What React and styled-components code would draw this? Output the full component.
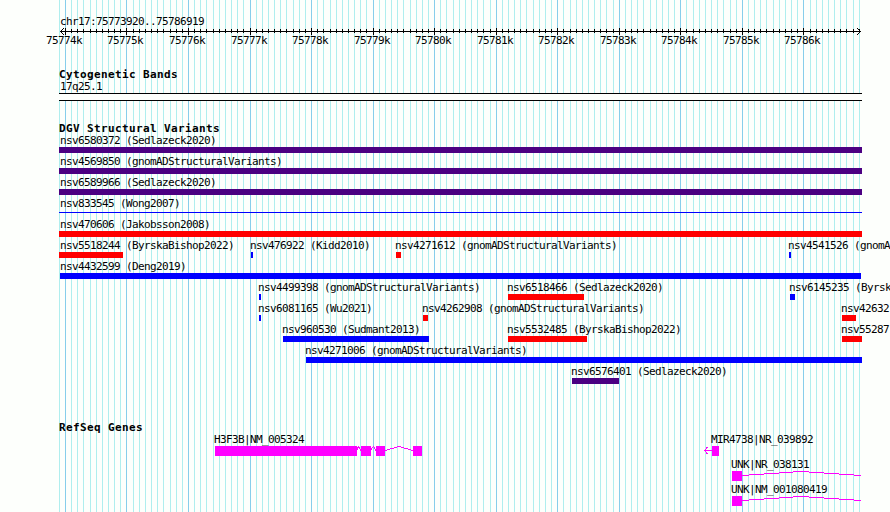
import React from "react";
import styled, { createGlobalStyle } from "styled-components";

const GlobalStyle = createGlobalStyle`
  html, body { margin: 0; padding: 0; overflow: hidden; background: #fdfffc; }
`;

const Browser = styled.main`
  position: relative;
  isolation: isolate;
  width: 890px;
  height: 512px;
  overflow: hidden;
  background: #fdfffc;
  color: #000;
  font-family: "DejaVu Sans Mono", monospace;
  font-size: 11px;
  line-height: 14px;
`;

const Backdrop = styled.svg`
  position: absolute;
  inset: 0;
  z-index: -1;
`;

const Text = styled.span`
  display: block;
  height: 12px;
  white-space: pre;
  letter-spacing: -0.622px;
`;

const Heading = styled.h2`
  margin: 0 0 0 59px;
  height: 12px;
  font-size: 11px;
  line-height: 14px;
  font-weight: 700;
  letter-spacing: 0.378px;
  white-space: pre;
`;

const Overview = styled.header`
  height: 68px;
  padding-top: 15px;
  box-sizing: border-box;
`;

const Region = styled(Text)`
  margin-left: 60px;
`;

const Axis = styled.svg`
  display: block;
  margin-top: 1px;
`;

const Columns = styled.div`
  display: grid;
  grid-template-columns: repeat(890, 1px);
  height: ${(p) => p.$height}px;
`;

const AxisLabel = styled(Text)`
  line-height: 12px;
`;

const Slot = styled.div`
  grid-row: 1;
  grid-column: ${(p) => p.$x + 1};
  width: 0;
`;

const Cytoband = styled.section`
  height: 54px;
`;

const BandName = styled(Text)`
  margin-left: 60px;
`;

const Band = styled.div`
  box-sizing: border-box;
  width: 803px;
  height: 8px;
  margin-left: 59px;
  margin-top: 1px;
  border: solid #000;
  border-width: 1px 0;
  background: #fdfffc;
`;

const Variants = styled.section`
  height: 299px;
`;

const VariantName = styled(Text)`
  margin-left: ${(p) => p.$shift}px;
`;

const Bar = styled.div`
  width: ${(p) => p.$w}px;
  height: ${(p) => (p.$thin ? 1 : 6)}px;
  margin-top: ${(p) => (p.$thin ? 3 : 1)}px;
  background: ${(p) => p.$color};
`;

const Gene = styled.div`
  width: 230px;
`;

const GeneName = styled(Text)`
  margin-left: -1px;
`;

const GeneModel = styled.svg`
  display: block;
  margin-left: -10px;
  margin-top: 1px;
  overflow: visible;
`;

const PURPLE = "#4b0082";
const RED = "#ff0000";
const BLUE = "#0000ff";
const PINK = "#ff00ff";

const ticks = Array.from({ length: 131 }, (_, i) => ({
  x: Math.floor(65.386 + ((i - 1) * 80) / 13),
  major: (i - 1) % 10 === 0,
}));
const rulerTicks = ticks.filter((t) => t.x < 862);
const kilobases = rulerTicks.filter((t) => t.major);

const lanes = [
  [["nsv6580372 (Sedlazeck2020)", 59, 803, PURPLE]],
  [["nsv4569850 (gnomADStructuralVariants)", 59, 803, PURPLE]],
  [["nsv6589966 (Sedlazeck2020)", 59, 803, PURPLE]],
  [["nsv833545 (Wong2007)", 59, 803, BLUE, true]],
  [["nsv470606 (Jakobsson2008)", 59, 803, RED]],
  [
    ["nsv5518244 (ByrskaBishop2022)", 59, 64, RED],
    ["nsv476922 (Kidd2010)", 251, 2, BLUE],
    ["nsv4271612 (gnomADStructuralVariants)", 396, 5, RED],
    ["nsv4541526 (gnomADStructuralVariants)", 789, 2, BLUE],
  ],
  [["nsv4432599 (Deng2019)", 60, 801, BLUE]],
  [
    ["nsv4499398 (gnomADStructuralVariants)", 259, 2, BLUE],
    ["nsv6518466 (Sedlazeck2020)", 508, 76, RED],
    ["nsv6145235 (ByrskaBishop2022)", 790, 5, BLUE],
  ],
  [
    ["nsv6081165 (Wu2021)", 259, 2, BLUE],
    ["nsv4262908 (gnomADStructuralVariants)", 423, 5, RED],
    ["nsv42632", 842, 14, RED],
  ],
  [
    ["nsv960530 (Sudmant2013)", 283, 146, BLUE],
    ["nsv5532485 (ByrskaBishop2022)", 508, 79, RED],
    ["nsv55287", 842, 20, RED],
  ],
  [["nsv4271006 (gnomADStructuralVariants)", 306, 556, BLUE]],
  [["nsv6576401 (Sedlazeck2020)", 572, 47, PURPLE]],
];

// Exons are [offset, width]; intron lines are drawn in the same offsets.
const geneLanes = [
  [
    {
      name: "H3F3B|NM_005324",
      x: 215,
      exons: [[0, 142], [146, 10], [161, 9], [198, 9]],
      path: "M142 3.5L143.5 .5L146 4.5M156 3.5L158.5 .5L161 4.5M170 4.5L184 .5L198 4.5",
    },
    {
      name: "MIR4738|NR_039892",
      x: 712,
      exons: [[0, 7]],
      path: "M0 4.5H-7.5M-4.5 1L-7.5 4.5L-4.5 8",
    },
  ],
  [{ name: "UNK|NR_038131", x: 732, exons: [[0, 10]], path: "M10 4.5L69 .5L129 4.5" }],
  [{ name: "UNK|NM_001080419", x: 732, exons: [[0, 10]], path: "M10 4.5L69 .5L129 4.5" }],
];

// Names of features that start at the panel edge are kept inside the panel.
const nameShift = (x) => (x <= 60 ? 60 - x : -1);

function Variant({ item: [name, x, w, color, thin] }) {
  return (
    <Slot $x={x}>
      <VariantName $shift={nameShift(x)}>{name}</VariantName>
      <Bar $w={w} $color={color} $thin={thin} />
    </Slot>
  );
}

function GeneFeature({ gene }) {
  return (
    <Slot $x={gene.x}>
      <Gene>
        <GeneName>{gene.name}</GeneName>
        <GeneModel width="240" height="10" viewBox="-10 0 240 10" shapeRendering="crispEdges">
          {gene.exons.map(([x, w]) => (
            <rect key={x} x={x} y="0" width={w} height="10" fill={PINK} />
          ))}
          <path d={gene.path} fill="none" stroke={PINK} />
        </GeneModel>
      </Gene>
    </Slot>
  );
}

export default function App() {
  return (
    <Browser>
      <GlobalStyle />
      <Backdrop width="890" height="512" shapeRendering="crispEdges">
        {rulerTicks.map((t) => (
          <rect key={t.x} x={t.x} width="1" height="512" fill={t.major ? "#87ceeb" : "#afeeee"} />
        ))}
      </Backdrop>
      <Overview>
        <Region>chr17:75773920..75786919</Region>
        <Axis width="890" height="7" shapeRendering="crispEdges">
          <rect x="60" y="3" width="801" height="1" />
          {rulerTicks.slice(1).map((t) => (
            <rect key={t.x} x={t.x} y={t.major ? 0 : 1} width="1" height={t.major ? 7 : 4} />
          ))}
          <path d="M64 0L60.5 3.5L64 7M857 0L860.5 3.5L857 7" fill="none" stroke="#000" />
        </Axis>
        <Columns $height={12}>
          {kilobases.map((t, i) => (
            <Slot key={t.x} $x={t.x - 19}>
              <AxisLabel>{`${75774 + i}k`}</AxisLabel>
            </Slot>
          ))}
        </Columns>
      </Overview>
      <Cytoband>
        <Heading>Cytogenetic Bands</Heading>
        <BandName>17q25.1</BandName>
        <Band />
      </Cytoband>
      <Variants>
        <Heading>DGV Structural Variants</Heading>
        {lanes.map((lane, i) => (
          <Columns key={i} $height={21}>
            {lane.map((item) => (
              <Variant key={item[0]} item={item} />
            ))}
          </Columns>
        ))}
      </Variants>
      <section>
        <Heading>RefSeq Genes</Heading>
        {geneLanes.map((lane, i) => (
          <Columns key={i} $height={25}>
            {lane.map((gene) => (
              <GeneFeature key={gene.name} gene={gene} />
            ))}
          </Columns>
        ))}
      </section>
    </Browser>
  );
}
